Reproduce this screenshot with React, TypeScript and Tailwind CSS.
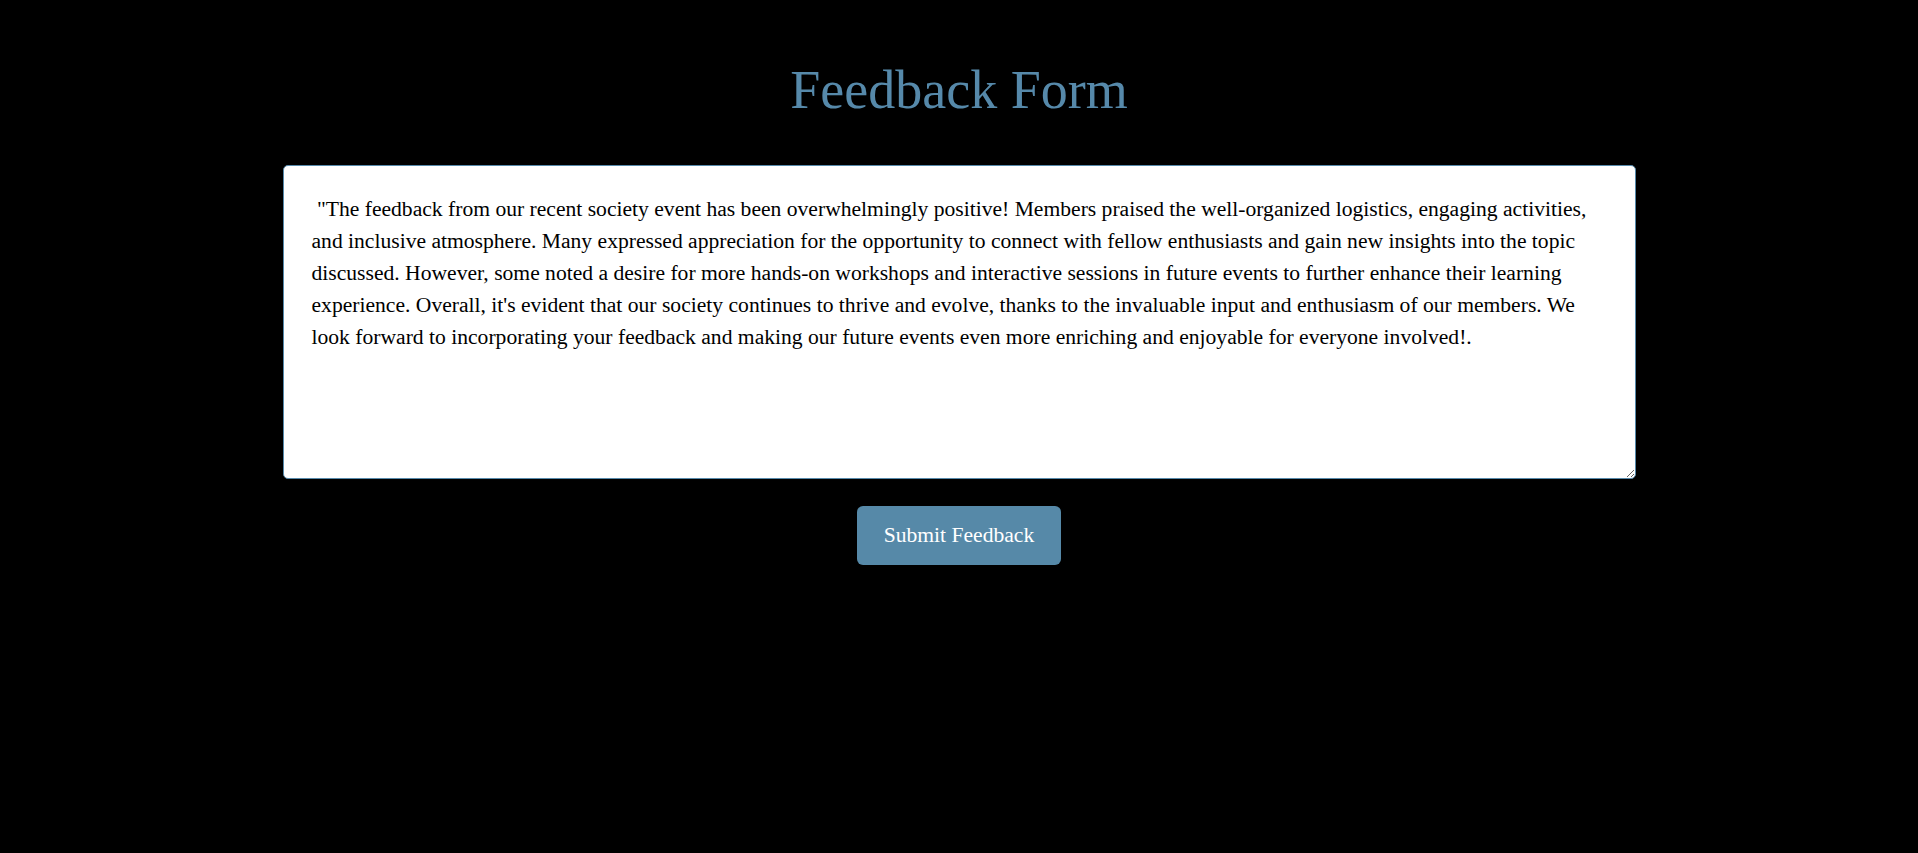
import { useState } from "react";

const initialFeedback =
  ' "The feedback from our recent society event has been overwhelmingly positive! Members praised the well-organized logistics, engaging activities, and inclusive atmosphere. Many expressed appreciation for the opportunity to connect with fellow enthusiasts and gain new insights into the topic discussed. However, some noted a desire for more hands-on workshops and interactive sessions in future events to further enhance their learning experience. Overall, it\'s evident that our society continues to thrive and evolve, thanks to the invaluable input and enthusiasm of our members. We look forward to incorporating your feedback and making our future events even more enriching and enjoyable for everyone involved!.';

const App = () => {
  const [feedback, setFeedback] = useState(initialFeedback);

  return (
    <div className="min-h-screen bg-black flex flex-col items-center font-['Liberation_Serif','Times_New_Roman',serif]">
      <h1 className="mt-[59px] text-[54px] leading-[62px] font-normal text-[#5689aa]">
        Feedback Form
      </h1>

      {/* feedback box */}
      <textarea
        value={feedback}
        onChange={(e) => setFeedback(e.target.value)}
        className="mt-[44px] w-[1353px] h-[314px] bg-white text-black border border-[#5689aa] rounded-[5px] pt-[27px] pl-[28px] pr-[25px] pb-[26px] text-[21.6px] leading-[32px] outline-none"
      />

      <button
        type="button"
        className="mt-[27px] w-[204px] h-[59px] rounded-[6px] bg-[#5689a8] text-white text-[21.6px] leading-none"
      >
        Submit Feedback
      </button>
    </div>
  );
};

export default App;
